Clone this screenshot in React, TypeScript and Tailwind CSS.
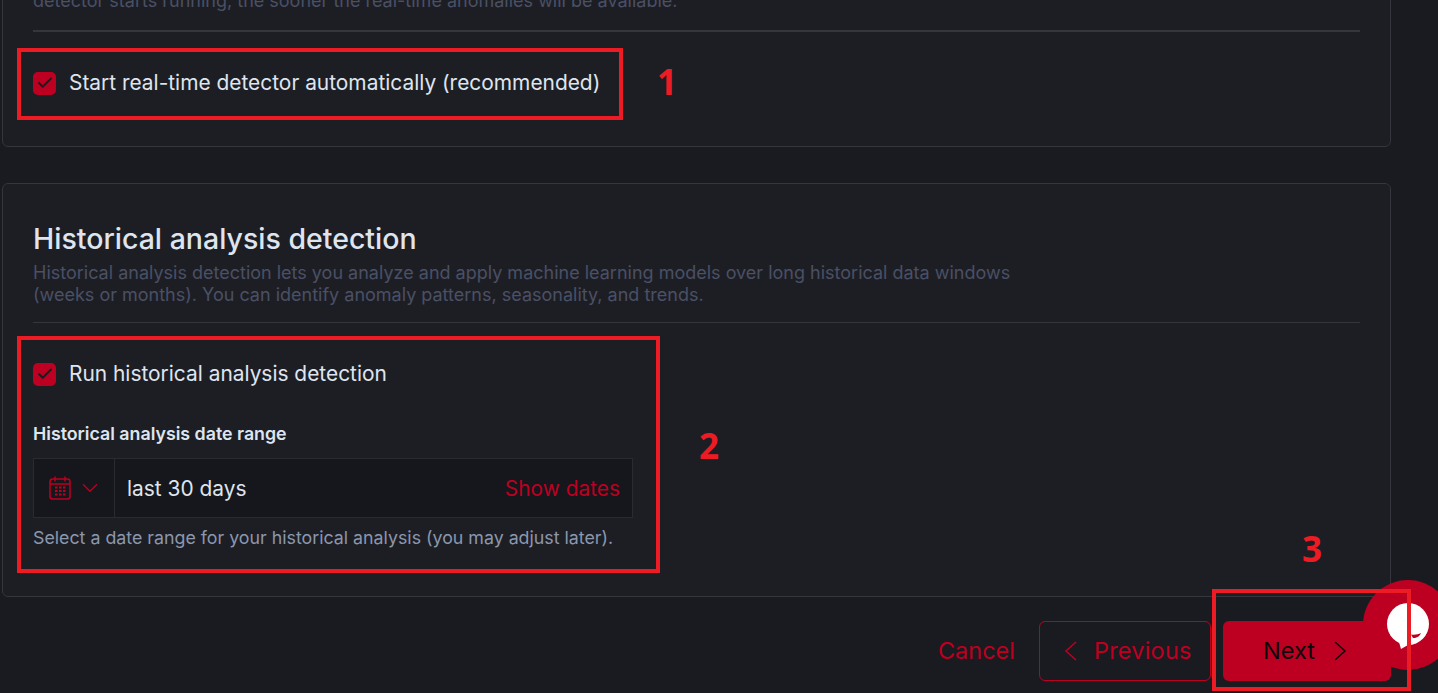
import { Check, ChevronDown } from "lucide-react";

function CheckRow({ label }: { label: string }) {
  return (
    <label className="flex items-center gap-[13px]">
      <span className="flex w-[23px] h-[23px] items-center justify-center rounded-[5px] bg-[#bd0021]">
        <Check className="w-[18px] h-[18px] text-[#1a1b20]" strokeWidth={2.5} />
      </span>
      <span className="text-[20.9px] leading-[24px] text-[#dfe5ef]">{label}</span>
    </label>
  );
}

function CalendarGlyph() {
  return (
    <svg viewBox="0 0 22 24" className="w-[22px] h-[24px] text-[#bd0021]" fill="none" stroke="currentColor" strokeWidth="1.5">
      <rect x="1" y="3" width="20" height="20" rx="2.5" />
      <path d="M1 8h20M6 0.5v5M16 0.5v5" />
      <path d="M6 11.500h2.500M10 11.500h2.500M14 11.500h2.500M6 15h2.500M10 15h2.500M14 15h2.500M6 18.500h2.500M10 18.500h2.500M14 18.500h2.500" strokeWidth="2" />
    </svg>
  );
}

function Chevron({ dir }: { dir: "left" | "right" }) {
  return (
    <svg viewBox="0 0 13 22" className="w-[13px] h-[22px]" fill="none" stroke="currentColor" strokeWidth="1.5">
      <path d={dir === "left" ? "M12 2L2 11l10 9" : "M1 2l10 9-10 9"} />
    </svg>
  );
}

function RedBox({ className }: { className: string }) {
  return <div className={`absolute border-[4px] border-[#ed1c24] pointer-events-none ${className}`} />;
}

function Marker({ n, className }: { n: string; className: string }) {
  return (
    <div
      className={`absolute text-[35px] leading-[36px] font-bold text-[#ed1c24] ${className}`}
      style={{ fontFamily: "'Open Sans', sans-serif" }}
    >
      {n}
    </div>
  );
}

export default function App() {
  return (
    <div
      className="relative h-[693px] overflow-hidden bg-[#1a1b20] pl-[2px] pr-[47px]"
      style={{ fontFamily: "Inter, 'Noto Sans', sans-serif" }}
    >
      {/* first card, scrolled past the top */}
      <section className="h-[167px] -mt-[20px] rounded-b-[6px] border border-[#34353d] bg-[#1d1e24] px-[30px]">
        <p className="h-[31px] pt-[8px] text-[18px] leading-[24px] text-[#4a5065]">
          detector starts running, the sooner the real-time anomalies will be available.
        </p>
        <hr className="mt-[18px] border-t-2 border-[#34353d]" />
        <div className="mt-[39px]">
          <CheckRow label="Start real-time detector automatically (recommended)" />
        </div>
      </section>

      <section className="mt-[36px] h-[414px] rounded-[6px] border border-[#34353d] bg-[#1d1e24] px-[30px] pt-[37px]">
        <h2 className="text-[28.5px] leading-[36px] font-medium text-[#dfe5ef]">Historical analysis detection</h2>
        <p className="mt-[5px] max-w-[990px] text-[18px] leading-[22px] text-[#4a5065]">
          Historical analysis detection lets you analyze and apply machine learning models over long historical data windows (weeks or months). You can identify anomaly patterns, seasonality, and trends.
        </p>
        <hr className="mt-[16px] border-[#34353d]" />
        <div className="mt-[39px]">
          <CheckRow label="Run historical analysis detection" />
        </div>
        <h3 className="mt-[36px] text-[17.8px] leading-[24px] font-semibold text-[#dfe5ef]">Historical analysis date range</h3>
        <div className="mt-[12px] flex h-[60px] w-[600px] border border-[#2a2b31] bg-[#16171c]">
          <div className="flex w-[81px] items-center gap-[6px] border-r border-[#2a2b31] pl-[15px]">
            <CalendarGlyph />
            <ChevronDown className="w-[26px] h-[26px] text-[#bd0021]" strokeWidth={1.2} />
          </div>
          <div className="flex flex-1 items-center justify-between px-[12px] pt-[2px]">
            <span className="text-[20.9px] text-[#dfe5ef]">last 30 days</span>
            <span className="text-[20.9px] text-[#bd0021]">Show dates</span>
          </div>
        </div>
        <p className="mt-[8px] text-[17.8px] leading-[24px] text-[#8b97ad]">
          Select a date range for your historical analysis (you may adjust later).
        </p>
      </section>

      <footer className="mt-[24px] flex items-center justify-end gap-[24px]">
        <a className="text-[23.5px] text-[#bd0021]">Cancel</a>
        <div className="flex items-center gap-[12px]">
          <button className="flex h-[60px] w-[172px] items-center gap-[17px] rounded-[6px] border border-[#bd0021] pl-[24px] text-[23.5px] tracking-[0.2px] text-[#bd0021]">
            <Chevron dir="left" />
            Previous
          </button>
          <button className="relative z-10 flex h-[60px] w-[168px] items-center gap-[19px] rounded-[6px] bg-[#bd0021] pl-[40px] text-[23.5px] text-[#0a0a0c]">
            Next
            <Chevron dir="right" />
          </button>
        </div>
      </footer>

      {/* chat bubble launcher */}
      <div className="absolute left-[1363px] top-[580px] flex h-[90px] w-[90px] items-center justify-center rounded-full bg-[#bd0021]">
        <svg viewBox="0 0 44 48" className="relative z-20 mt-[4px] w-[44px] h-[48px]">
          <circle cx="22" cy="21" r="21" fill="#fff" />
          <path d="M13 39l2 7 7-4z" fill="#fff" />
          <path d="M25 31.500c4 .5 7 0 10-1.500-1 3-4 5-8 5z" fill="#bd0021" />
        </svg>
      </div>

      {/* annotations */}
      <RedBox className="left-[17px] top-[48px] w-[606px] h-[72px]" />
      <RedBox className="left-[17px] top-[336px] w-[643px] h-[237px]" />
      <RedBox className="z-30 left-[1212px] top-[589px] w-[199px] h-[102px]" />
      <Marker n="1" className="left-[657px] top-[64px]" />
      <Marker n="2" className="left-[699px] top-[428px]" />
      <Marker n="3" className="left-[1302px] top-[531px]" />
    </div>
  );
}
